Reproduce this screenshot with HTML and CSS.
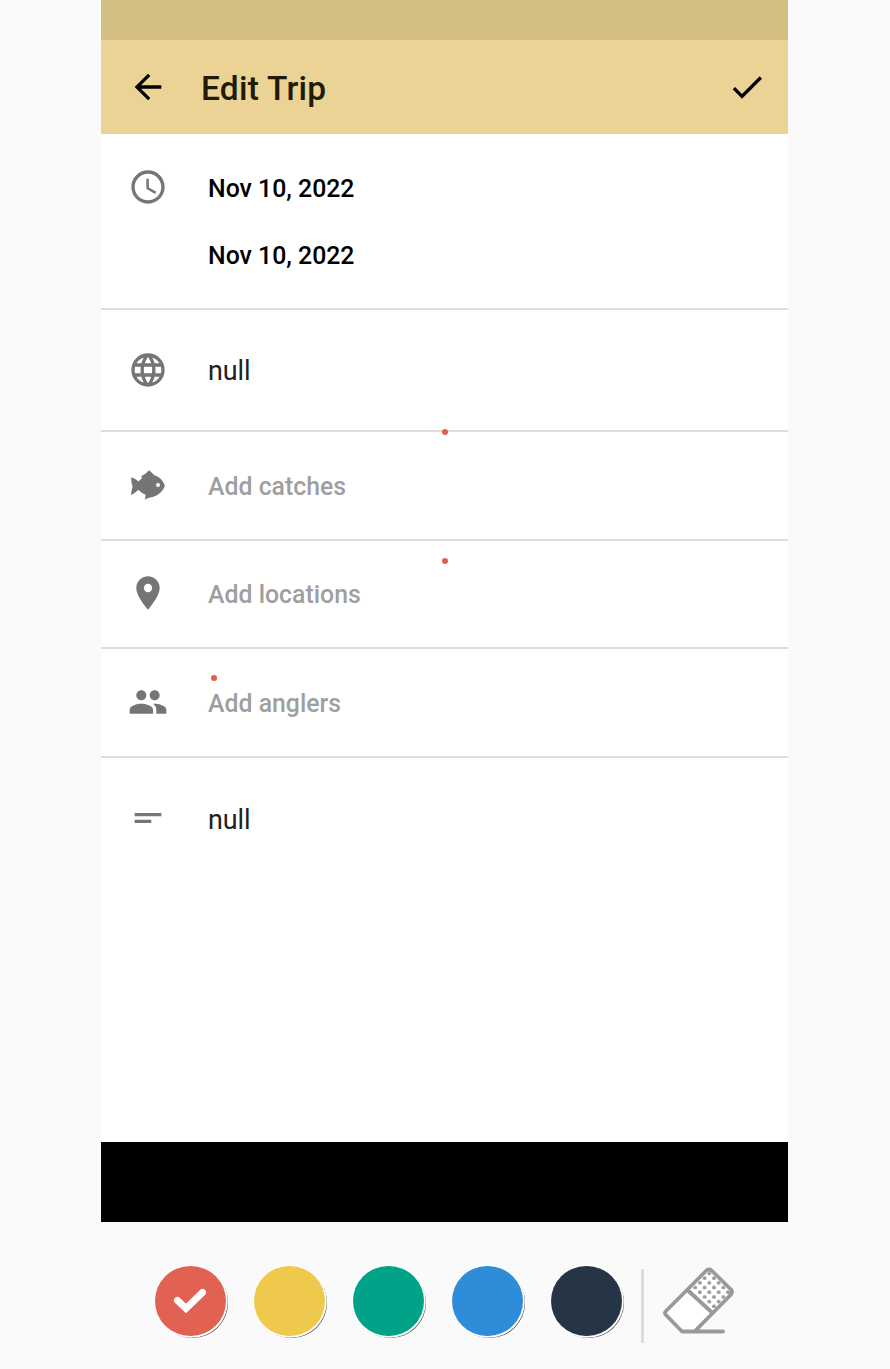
FILE: index.html
```
<!DOCTYPE html>
<html lang="en">
<head>
<meta charset="utf-8">
<title>Edit Trip</title>
<link rel="stylesheet" href="styles.css">
</head>
<body>
<main class="phone">
  <div class="status-bar"></div>
  <header class="app-bar">
    <svg class="icon" viewBox="0 0 24 24"><path d="M20 11H7.83l5.59-5.59L12 4l-8 8 8 8 1.41-1.41L7.83 13H20z"/></svg>
    <h1 class="title">Edit Trip</h1>
    <svg class="icon" viewBox="0 0 24 24"><path d="M9 16.17 4.83 12l-1.42 1.41L9 19 21 7l-1.41-1.41z"/></svg>
  </header>
  <section class="row row-dates">
    <svg class="icon" viewBox="0 0 24 24"><path d="M11.99 2C6.47 2 2 6.48 2 12s4.47 10 9.99 10C17.52 22 22 17.52 22 12S17.52 2 11.99 2zM12 20c-4.42 0-8-3.58-8-8s3.58-8 8-8 8 3.58 8 8-3.58 8-8 8zm.5-13H11v6l5.25 3.15.75-1.23-4.5-2.67z"/></svg>
    <div class="dates"><span class="date">Nov 10, 2022</span><span class="date">Nov 10, 2022</span></div>
  </section>
  <section class="row row-zone">
    <svg class="icon" viewBox="0 0 24 24"><path d="M11.99 2C6.47 2 2 6.48 2 12s4.47 10 9.99 10C17.52 22 22 17.52 22 12S17.52 2 11.99 2zm6.93 6h-2.95c-.32-1.25-.78-2.45-1.38-3.56 1.84.63 3.37 1.91 4.33 3.56zM12 4.04c.83 1.2 1.48 2.53 1.91 3.96h-3.82c.43-1.43 1.08-2.76 1.91-3.96zM4.26 14C4.1 13.36 4 12.69 4 12s.1-1.36.26-2h3.38c-.08.66-.14 1.32-.14 2s.06 1.34.14 2H4.26zm.82 2h2.95c.32 1.25.78 2.45 1.38 3.56-1.84-.63-3.37-1.9-4.33-3.56zm2.95-8H5.08c.96-1.66 2.49-2.93 4.33-3.56C8.81 5.55 8.35 6.75 8.03 8zM12 19.96c-.83-1.2-1.48-2.53-1.91-3.96h3.82c-.43 1.43-1.08 2.76-1.91 3.96zM14.34 14H9.66c-.09-.66-.16-1.32-.16-2s.07-1.35.16-2h4.68c.09.65.16 1.32.16 2s-.07 1.34-.16 2zm.25 5.56c.6-1.11 1.06-2.31 1.38-3.56h2.95c-.96 1.65-2.49 2.93-4.33 3.56zM16.36 14c.08-.66.14-1.32.14-2s-.06-1.34-.14-2h3.38c.16.64.26 1.31.26 2s-.1 1.36-.26 2h-3.38z"/></svg>
    <span class="value">null</span>
  </section>
  <section class="row row-add">
    <svg class="icon" viewBox="0 0 40 40"><path d="M3.2 12.3c2.600.7 4.900 2 7.100 4.100 1-.9 2.200-1.900 3.600-2.800l-.5-2.400c2.800-1.400 4.900-3.300 7.800-6l5.400 5.200c4.900 1.200 8.500 5 10.300 10.200-1.800 6-7 10.400-13.100 11.700-2.400.3-4.700 1.200-7.200 2.300.7-1.700 1.100-3.300 1-4.800-2.700-1.100-5-2.800-7.300-5-2 2.200-4.400 4.200-7.500 4.900.7-3 1-5.600 1.800-8.400-1.100-2.900-1.500-5.800-1.400-9z"/><circle cx="30" cy="20" r="2" fill="#fff"/></svg>
    <span class="hint">Add catches</span>
  </section>
  <section class="row row-add">
    <svg class="icon" viewBox="0 0 24 24"><path d="M12 2C8.130 2 5 5.130 5 9c0 5.250 7 13 7 13s7-7.750 7-13c0-3.870-3.130-7-7-7zm0 9.500a2.500 2.500 0 1 1 0-5 2.500 2.500 0 0 1 0 5z"/></svg>
    <span class="hint">Add locations</span>
  </section>
  <section class="row row-add">
    <svg class="icon" viewBox="0 0 24 24"><path d="M16 11c1.660 0 2.990-1.340 2.990-3S17.660 5 16 5s-3 1.340-3 3 1.340 3 3 3zm-8 0c1.660 0 2.990-1.340 2.990-3S9.660 5 8 5 5 6.340 5 8s1.340 3 3 3zm0 2c-2.330 0-7 1.170-7 3.500V19h14v-2.500C15 14.170 10.330 13 8 13zm8 0c-.29 0-.62.02-.97.05 1.160.840 1.970 1.970 1.970 3.450V19h6v-2.500c0-2.330-4.670-3.500-7-3.500z"/></svg>
    <span class="hint">Add anglers</span>
  </section>
  <section class="row row-notes">
    <svg class="icon" viewBox="0 0 24 24"><path d="M4 9h16v2H4zM4 13h10v2H4z"/></svg>
    <span class="value">null</span>
  </section>
  <div class="nav-bar"></div>
  <i class="dot dot-a"></i><i class="dot dot-b"></i><i class="dot dot-c"></i>
</main>
<footer class="palette">
  <div class="swatch red"><svg class="tick" viewBox="0 0 34 27"><path d="M4.500 13.500 13 21.500 29.500 5.500"/></svg></div>
  <div class="swatch yellow"></div>
  <div class="swatch green"></div>
  <div class="swatch blue"></div>
  <div class="swatch navy"></div>
  <div class="divider"></div>
  <svg class="eraser" viewBox="0 0 74 70">
    <defs><pattern id="dots" width="9.400" height="9.400" patternUnits="userSpaceOnUse" patternTransform="translate(42.600 4.400)"><circle cx="4.700" cy="3" r="1.900"/><circle cx="0" cy="7.700" r="1.900"/><circle cx="9.400" cy="7.700" r="1.900"/></pattern></defs>
    <path class="body" d="M20 65 4 49q-2-2 0-4L45 4q2.500-2 5 0l20 19q2 2.500 0 5L35 63v2z"/>
    <path class="dots" d="M27 25 47 5l23 21-20 20z"/>
    <path class="line" d="M61 65.500H20L4 49q-2-2 0-4L44.500 4.500q2.500-2 5 0l19.500 19q2 2.500 0 5L34 64M27 25.500l23 21"/>
  </svg>
</footer>
</body>
</html>
```
FILE: styles.css
```
* { box-sizing: border-box; }
body { margin: 0; height: 1369px; background: #fafafa; font-family: Roboto, sans-serif; overflow: hidden; }
.phone { position: relative; width: 687px; height: 1222px; margin-left: 101px; background: #fff; display: flex; flex-direction: column; }
.status-bar { height: 40px; background: #d3bf84; }
.app-bar { height: 94px; padding: 0 21px 0 27px; background: #ead394; display: flex; align-items: center; color: #211b04; }
.icon { width: 40px; height: 40px; flex: none; display: block; }
.app-bar .icon { fill: #000; }
.title { flex: 1; margin: 3px 0 0 33px; font-size: 33.500px; line-height: 40px; font-weight: 500; letter-spacing: .25px; }
.row { display: flex; align-items: center; padding-left: 27px; gap: 40px; border-bottom: 2px solid #dedede; }
.row .icon { fill: #757575; }
.row-dates { height: 176px; align-items: flex-start; padding-top: 33px; }
.dates { display: flex; flex-direction: column; gap: 27px; padding-top: 2px; }
.date { font-size: 24.850px; line-height: 40px; font-weight: 500; color: #000; }
.row-zone { height: 122px; padding-bottom: 1px; }
.row-add { height: 108.670px; padding-bottom: 1px; }
.row-notes { height: 122px; padding-bottom: 1px; border-bottom: 0; }
.value { padding-top: 3px; font-size: 26.900px; line-height: 36px; letter-spacing: -.1px; color: #212121; }
.hint { padding-top: 4px; font-size: 24.850px; line-height: 36px; font-weight: 500; color: #9f9f9f; }
.nav-bar { margin-top: auto; height: 80.500px; background: #000; }
.dot { position: absolute; width: 6px; height: 6px; border-radius: 50%; background: #e35f50; }
.dot-a { left: 341px; top: 429px; }
.dot-b { left: 341px; top: 558px; }
.dot-c { left: 110px; top: 675px; }
.palette { display: flex; align-items: flex-start; padding: 43.500px 0 0 155px; }
.swatch { width: 70.500px; height: 70.500px; margin-right: 28.500px; border-radius: 50%; display: flex; align-items: center; justify-content: center; box-shadow: 0 0 0 1px #fff, .8px .8px 0 1px #fff, 1.800px 1.800px 0 .2px #333; }
.red { background: #e16153; }
.yellow { background: #efc94c; }
.green { background: #00a388; }
.blue { background: #2e8cd8; }
.navy { background: #263545; margin-right: 19.500px; }
.tick { width: 34px; height: 27px; margin-left: -1px; fill: none; stroke: #fff; stroke-width: 7; stroke-linejoin: miter; stroke-linecap: round; }
.divider { width: 3px; height: 74px; margin-top: 3.500px; background: #dcdcdc; }
.eraser { width: 74px; height: 70px; margin: 0 0 0 17.500px; }
.body { fill: #fff; }
.dots { fill: url(#dots); }
.eraser circle { fill: #999; }
.line { fill: none; stroke: #999; stroke-width: 3.800; stroke-linecap: round; stroke-linejoin: round; }
```
